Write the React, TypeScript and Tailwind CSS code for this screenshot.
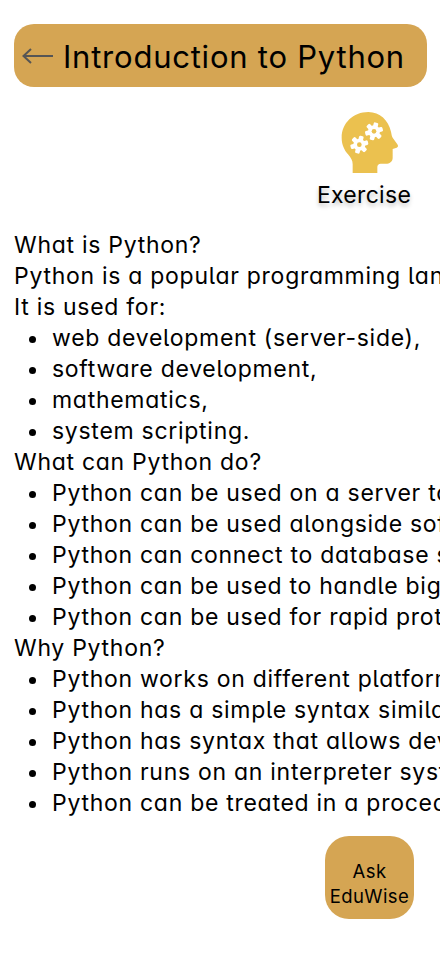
import React from "react";

const Bullets = ({ items }: { items: string[] }) => (
  <ul className="pl-[15px]">
    {items.map((t) => (
      <li key={t} className="flex items-center">
        <span className="shrink-0 w-[7px] h-[7px] mt-[1px] mr-[16px] rounded-full bg-black" />
        {t}
      </li>
    ))}
  </ul>
);

const Gear = ({ cx, cy }: { cx: number; cy: number }) => (
  <g transform={`translate(${cx} ${cy})`}>
    <circle r="18" fill="#fff" />
    {[0, 60, 120, 180, 240, 300].map((a) => (
      <rect key={a} x="-7" y="-27" width="14" height="14" rx="4" fill="#fff" transform={`rotate(${a + 15})`} />
    ))}
    <circle r="7" fill="#ebc14f" />
  </g>
);

export default function App() {
  return (
    <div className="relative w-[440px] h-[956px] overflow-hidden bg-white text-black font-['Inter','Noto_Sans',sans-serif] [font-feature-settings:'cv11','cv05']">
      <div className="px-[14px] pt-6 w-[441px]">
        <div className="flex items-center h-[63px] rounded-[20px] bg-[#d5a553] pl-[8px] gap-[9px]">
          <svg width="32" height="20" viewBox="0 0 32 20" fill="none" stroke="#555" strokeWidth="2">
            <path d="M1.5 10H31M9 3l-7.5 7 7.5 7" />
          </svg>
          <span className="text-[31px] leading-none tracking-[0.77px] whitespace-nowrap mt-[2px]">Introduction to Python</span>
        </div>
      </div>
      <div className="flex justify-end pr-[29px] mt-6">
        <div className="flex flex-col items-center w-[94px]">
          <svg width="60" height="65" viewBox="120 32 180 195" className="ml-[12px]">
            <path
              fill="#ebc14f"
              d="M205 35C160 35 125 68 125 112c0 22 9 38 19 50 9 11 14 18 14 30v26h74v-18c0-6 4-10 10-10h16c10 0 20-6 20-18v-26l12-4c5-2 5-6 2-10l-14-20c-3-5-3-9-5-18C265 60 240 35 205 35z"
            />
            <Gear cx={222} cy={93} />
            <Gear cx={178} cy={133} />
          </svg>
          <span className="text-[23px] leading-[31px] tracking-[0.3px] mt-[4px] [text-shadow:0_3px_4px_rgba(0,0,0,0.25)]">Exercise</span>
        </div>
      </div>
      <div className="mt-[19px] pl-[14px] text-[23px] leading-[31px] tracking-[0.72px] whitespace-nowrap">
        <p>What is Python?</p>
        <p>Python is a popular programming language. It was created by Guido van Rossum.</p>
        <p>It is used for:</p>
        <Bullets items={["web development (server-side),", "software development,", "mathematics,", "system scripting."]} />
        <p>What can Python do?</p>
        <Bullets items={["Python can be used on a server to create web applications.", "Python can be used alongside software to create workflows.", "Python can connect to database systems.", "Python can be used to handle big data.", "Python can be used for rapid prototyping."]} />
        <p>Why Python?</p>
        <Bullets items={["Python works on different platforms.", "Python has a simple syntax similar to English.", "Python has syntax that allows developers.", "Python runs on an interpreter system.", "Python can be treated in a procedural way."]} />
      </div>
      <div className="absolute left-[325px] top-[836px] w-[89px] h-[83px] rounded-[24px] bg-[#d5a553] flex items-center justify-center text-center text-[18.5px] leading-[25px] tracking-[0.4px] pt-[13px]">
        Ask<br />EduWise
      </div>
    </div>
  );
}
